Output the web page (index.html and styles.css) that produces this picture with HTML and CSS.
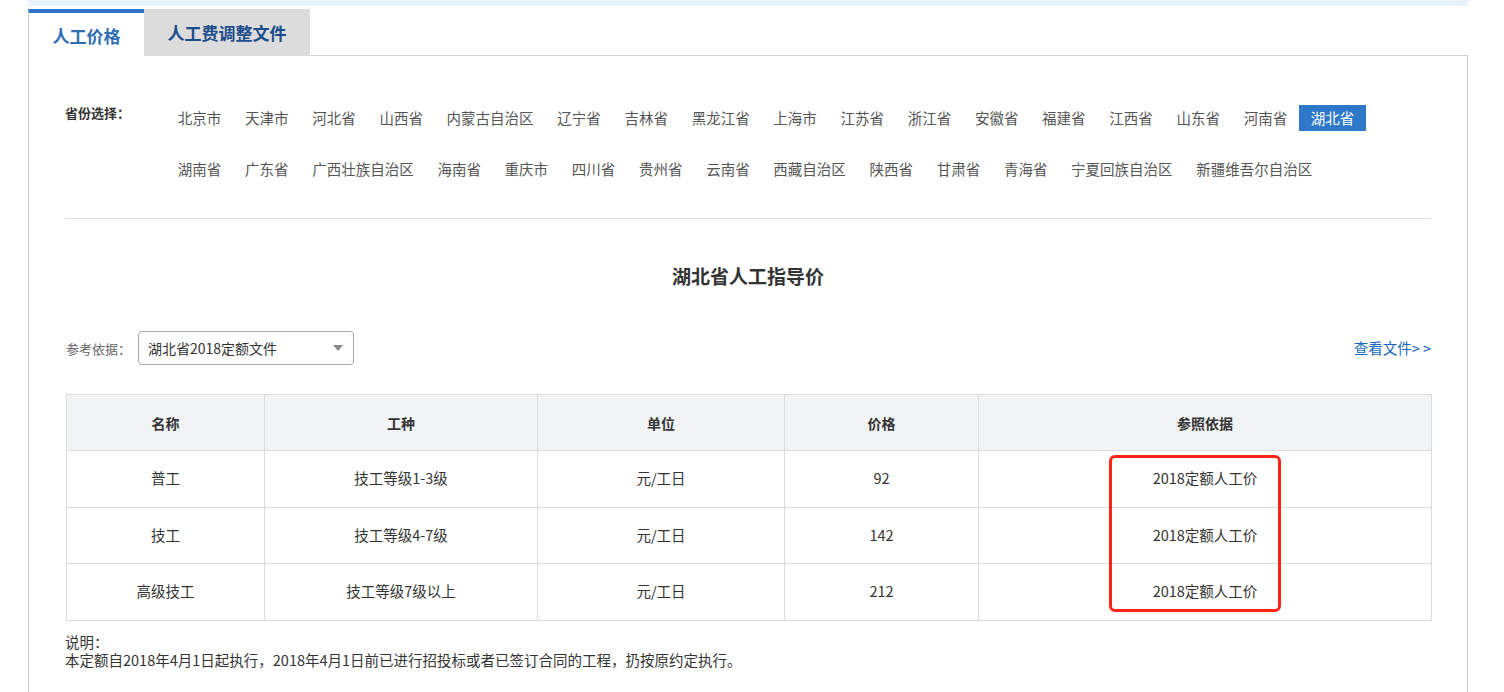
FILE: index.html
```html
<!DOCTYPE html>
<html lang="zh-CN">
<head>
<meta charset="utf-8">
<title>湖北省人工指导价</title>
<link rel="stylesheet" href="styles.css">
</head>
<body>
<div class="page">
  <div class="top-strip"></div>
  <div class="tabs">
    <div class="tab tab-active">人工价格</div>
    <div class="tab tab-inactive">人工费调整文件</div>
    <div class="tab-fill"></div>
  </div>
  <div class="panel">
    <div class="province">
      <div class="province-label">省份选择：</div>
      <ul class="province-list">
        <li>北京市</li><li>天津市</li><li>河北省</li><li>山西省</li><li>内蒙古自治区</li><li>辽宁省</li><li>吉林省</li><li>黑龙江省</li><li>上海市</li><li>江苏省</li><li>浙江省</li><li>安徽省</li><li>福建省</li><li>江西省</li><li>山东省</li><li>河南省</li><li class="selected">湖北省</li>
        <li>湖南省</li><li>广东省</li><li>广西壮族自治区</li><li>海南省</li><li>重庆市</li><li>四川省</li><li>贵州省</li><li>云南省</li><li>西藏自治区</li><li>陕西省</li><li>甘肃省</li><li>青海省</li><li>宁夏回族自治区</li><li>新疆维吾尔自治区</li>
      </ul>
    </div>
    <div class="divider"></div>
    <h2 class="title">湖北省人工指导价</h2>
    <div class="basis">
      <div class="basis-left">
        <span class="basis-label">参考依据：</span>
        <div class="select">
          <span>湖北省2018定额文件</span>
          <svg class="caret" width="10" height="6" viewBox="0 0 10 6"><path d="M0 0 L10 0 L5 6 Z" fill="#8a8a8a"/></svg>
        </div>
      </div>
      <a class="view-link" href="#">查看文件&gt; &gt;</a>
    </div>
    <div class="table-wrap">
      <table class="price-table">
        <colgroup>
          <col class="c1"><col class="c2"><col class="c3"><col class="c4"><col class="c5">
        </colgroup>
        <thead>
          <tr><th>名称</th><th>工种</th><th>单位</th><th>价格</th><th>参照依据</th></tr>
        </thead>
        <tbody>
          <tr><td>普工</td><td>技工等级1-3级</td><td>元/工日</td><td>92</td><td>2018定额人工价</td></tr>
          <tr><td>技工</td><td>技工等级4-7级</td><td>元/工日</td><td>142</td><td>2018定额人工价</td></tr>
          <tr><td>高级技工</td><td>技工等级7级以上</td><td>元/工日</td><td>212</td><td>2018定额人工价</td></tr>
        </tbody>
      </table>
      <div class="highlight"></div>
    </div>
    <div class="note">
      <div>说明：</div>
      <div>本定额自2018年4月1日起执行，2018年4月1日前已进行招投标或者已签订合同的工程，扔按原约定执行。</div>
    </div>
  </div>
</div>
</body>
</html>
```

FILE: styles.css
```css
* { box-sizing: border-box; }
html, body { margin: 0; padding: 0; background: #fff; }
body {
  font-family: "Microsoft YaHei", "Noto Sans CJK SC", "Noto Sans", sans-serif;
  font-size: 14px;
  color: #333;
}
.page {
  margin-left: 28px;
  width: 1440px;
}
.top-strip {
  height: 6px;
  background: #e8f0fa;
}
.tabs {
  display: flex;
  margin-top: 3px;
  height: 47px;
  align-items: stretch;
}
.tab {
  font-size: 17px;
  font-weight: bold;
  display: flex;
  align-items: center;
  justify-content: center;
  line-height: 1;
  white-space: nowrap;
}
.tab-active {
  width: 116px;
  background: #fff;
  color: #2f6db5;
  border-top: 4px solid #2f76c9;
  border-left: 1px solid #cfcfcf;
  padding-top: 1px;
}
.tab-inactive {
  width: 166px;
  background: #dcdcdc;
  color: #1b4d8c;
  border-bottom: 1px solid #dcdcdc;
}
.tab-fill {
  flex: 1;
  border-bottom: 1px solid #cfcfcf;
}
.panel {
  border: 1px solid #cfcfcf;
  border-top: none;
  padding: 49px 36px 30px 36px;
  min-height: 660px;
}
.province {
  display: flex;
  align-items: flex-start;
}
.province-label {
  width: 101px;
  flex: none;
  font-size: 13px;
  font-weight: bold;
  color: #333;
  line-height: 18px;
  margin-top: -1px;
}
.province-list {
  list-style: none;
  margin: 0;
  padding: 0;
  width: 1230px;
  display: flex;
  flex-wrap: wrap;
  row-gap: 25px;
}
.province-list li {
  height: 26px;
  line-height: 26px;
  padding: 0 11.85px;
  color: #555;
  font-size: 14.5px;
  white-space: nowrap;
}
.province-list li.selected {
  background: #2d78c9;
  color: #fff;
}
.divider {
  margin-top: 36px;
  height: 1px;
  background: #e3e3e3;
}
.title {
  margin: 42px 0 0 0;
  text-align: center;
  font-size: 19px;
  line-height: 30px;
  font-weight: bold;
  color: #333;
}
.basis {
  margin-top: 40px;
  display: flex;
  justify-content: space-between;
  align-items: center;
  height: 34px;
}
.basis-left {
  display: flex;
  align-items: center;
}
.basis-label {
  font-size: 13px;
  color: #666;
  width: 72px;
  margin-left: 1px;
}
.select {
  width: 216px;
  height: 34px;
  border: 1px solid #a9a9a9;
  border-radius: 4px;
  display: flex;
  align-items: center;
  justify-content: space-between;
  padding: 0 10px 0 9px;
  font-size: 14px;
  color: #333;
}
.caret { display: block; margin-top: -1px; }
.view-link {
  color: #1767bd;
  text-decoration: none;
  font-size: 14.5px;
  margin-top: -2px;
}
.table-wrap {
  position: relative;
  margin-top: 29px;
  margin-left: 1px;
}
.price-table {
  width: 1365px;
  border-collapse: collapse;
  table-layout: fixed;
}
.c1 { width: 198px; }
.c2 { width: 273px; }
.c3 { width: 247px; }
.c4 { width: 194px; }
.c5 { width: 453px; }
.price-table th,
.price-table td {
  border: 1px solid #dcdcdc;
  text-align: center;
  vertical-align: middle;
  font-size: 14.5px;
  color: #333;
  padding: 0;
}
.price-table th {
  background: #f2f3f5;
  font-weight: bold;
  font-size: 14px;
  height: 56px;
}
.price-table td {
  height: 56.5px;
  padding-bottom: 2px;
}
.highlight {
  position: absolute;
  left: 1043px;
  top: 61px;
  width: 172px;
  height: 157px;
  border: 3px solid #ff2418;
  border-radius: 6px;
}
.note {
  margin-top: 12px;
  font-size: 14.5px;
  line-height: 18px;
  color: #333;
}
```
